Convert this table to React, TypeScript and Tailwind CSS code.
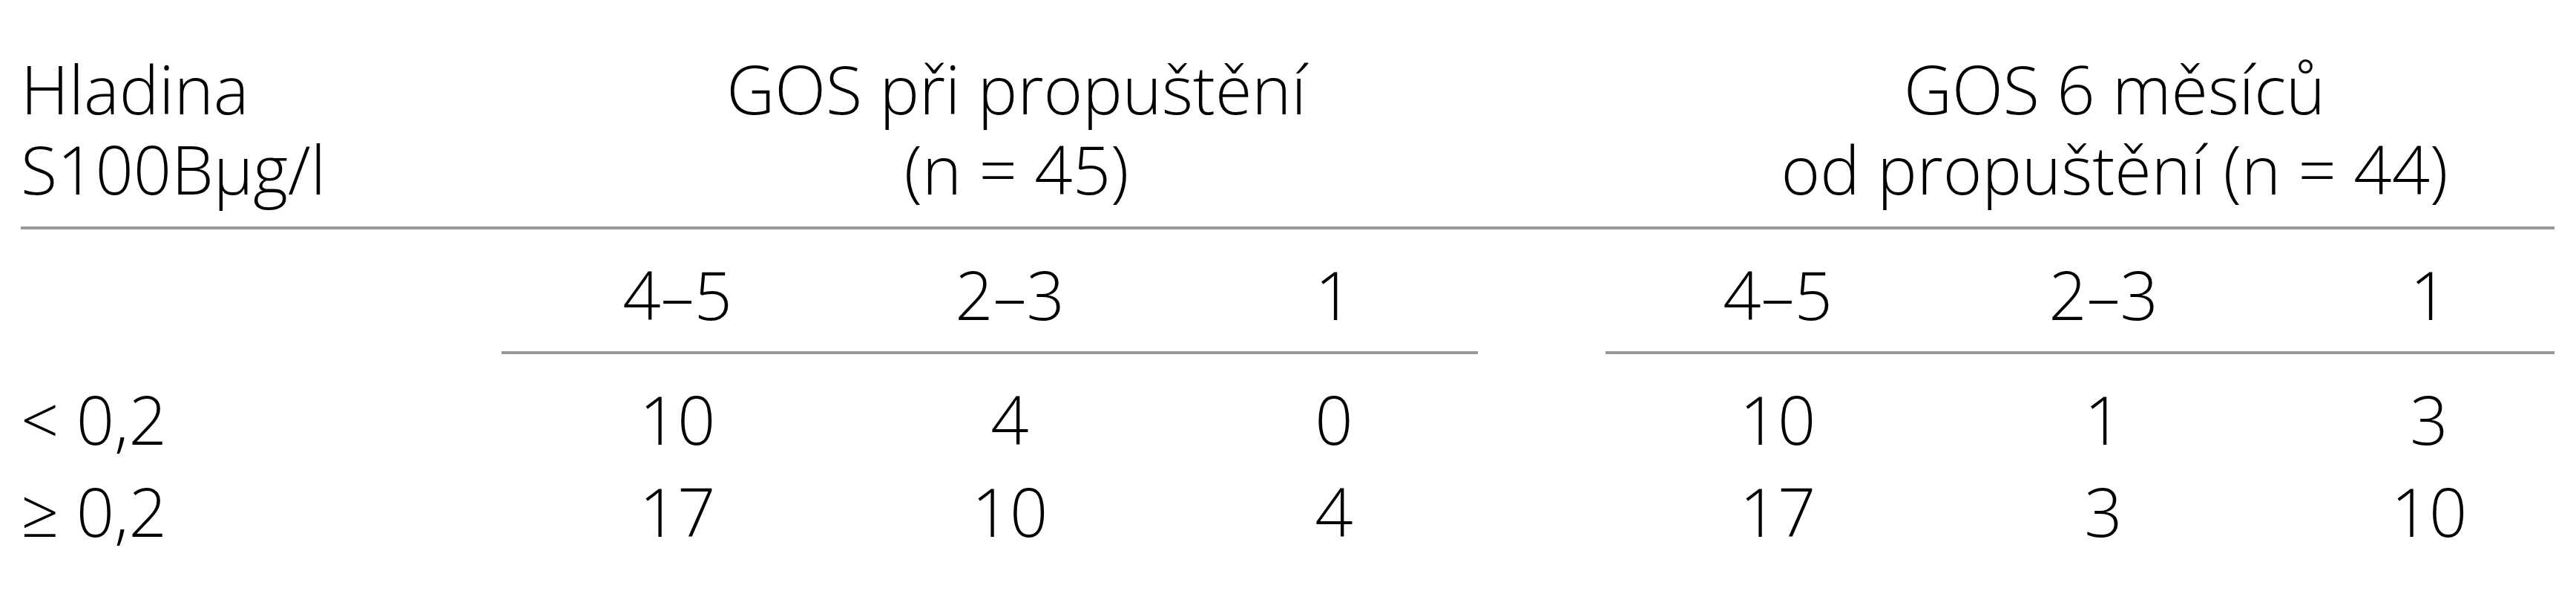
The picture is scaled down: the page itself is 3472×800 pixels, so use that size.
import React from "react";

const grid =
  "grid grid-cols-[666px_438px_458px_416px_170px_440px_438px_1fr]";

function Cell({ children, last }: { children: React.ReactNode; last?: boolean }) {
  return <div className={last ? "text-center pl-[22px]" : "text-center"}>{children}</div>;
}

function DataRow({ label, values, className }: { label: string; values: string[]; className: string }) {
  return (
    <div className={`${grid} ${className}`}>
      <div className="text-left">{label}</div>
      <Cell>{values[0]}</Cell>
      <Cell>{values[1]}</Cell>
      <Cell>{values[2]}</Cell>
      <div />
      <Cell>{values[3]}</Cell>
      <Cell>{values[4]}</Cell>
      <Cell last>{values[5]}</Cell>
    </div>
  );
}

export default function App() {
  return (
    <div className="w-[3472px] min-h-[800px] bg-white pl-[28px] pt-[65px] text-black font-['Open_Sans',sans-serif] font-light text-[90px] leading-[108px]">
      <div className={`${grid} pb-[24px]`}>
        <div className="text-left whitespace-pre-line">{"Hladina\nS100Bμg/l"}</div>
        <div className="col-start-2 col-span-3 text-center pl-[40px] whitespace-pre-line">
          {"GOS při propuštění\n(n = 45)"}
        </div>
        <div className="col-start-6 col-span-3 text-center pl-[52px] whitespace-pre-line">
          {"GOS 6 měsíců\nod propuštění (n = 44)"}
        </div>
      </div>
      <div className="h-[4px] bg-[#999999] mr-[29px]" />
      <div className={`${grid} mt-[33px]`}>
        <div />
        <Cell>4–5</Cell>
        <Cell>2–3</Cell>
        <Cell>1</Cell>
        <div />
        <Cell>4–5</Cell>
        <Cell>2–3</Cell>
        <Cell last>1</Cell>
      </div>
      <div className={`${grid} mt-[23px]`}>
        <div className="col-start-2 col-span-3 h-[4px] bg-[#999999] ml-[-18px] mr-[14px]" />
        <div className="col-start-6 col-span-3 h-[4px] bg-[#999999] ml-[-12px] mr-[29px]" />
      </div>
      <DataRow className="mt-[33px]" label="< 0,2" values={["10", "4", "0", "10", "1", "3"]} />
      <DataRow className="mt-[16px]" label="≥ 0,2" values={["17", "10", "4", "17", "3", "10"]} />
    </div>
  );
}
